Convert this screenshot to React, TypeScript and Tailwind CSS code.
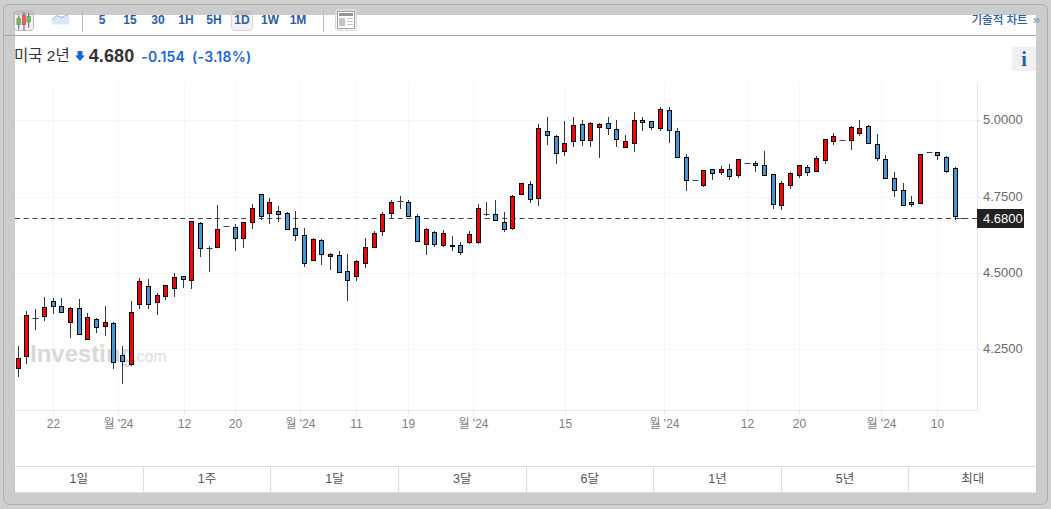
const sans = 'font-["Liberation_Sans","Noto_Sans_CJK_KR",sans-serif]'

// [type, wick top, body top, body bottom, wick bottom]
// r = up, b = down, d = doji, f = flat dash
const candles: [string, number, number, number, number][] = [
  ['r', 346, 358.3, 368.3, 376.7], ['r', 311, 315.3, 356.3, 363.7], ['d', 309.3, 318, 318, 329.7], ['r', 297, 307.3, 316.3, 320.7],
  ['b', 298, 301.3, 306.3, 314], ['b', 298, 306.3, 312.3, 313], ['r', 307.3, 308.3, 322.3, 337.7], ['b', 299, 308.3, 334.3, 334.3],
  ['r', 313.3, 317.3, 339.3, 339.7], ['b', 318.3, 319.3, 327.3, 333], ['r', 306.7, 322.3, 326.3, 336], ['b', 322.7, 323.3, 362.3, 369],
  ['b', 346, 355.3, 361.3, 384], ['r', 301, 312.3, 364.3, 365.7], ['r', 278.3, 281.3, 304.3, 308.3], ['b', 279, 286.3, 304.3, 309],
  ['r', 293.3, 295.3, 302.3, 314.7], ['r', 285.3, 285.3, 296.3, 299.3], ['r', 273.3, 277.3, 288.3, 297], ['b', 276, 276.3, 279.3, 288],
  ['r', 221, 221.3, 280.3, 289], ['b', 222.3, 223.3, 248.3, 257], ['d', 246, 248.3, 248.3, 272], ['r', 205, 229.3, 247.3, 247.3],
  ['f', 226.3, 226.3, 226.3, 226.3], ['b', 224.3, 227.3, 238.3, 251], ['r', 222.3, 222.3, 238.3, 248], ['r', 204, 208.3, 222.3, 229],
  ['b', 194.3, 194.3, 216.3, 220], ['r', 198.3, 202.3, 213.3, 223.3], ['b', 206, 211.3, 214.3, 221.7], ['b', 212.3, 213.3, 229.3, 229.7],
  ['b', 211, 228.3, 235.3, 240.7], ['b', 228.3, 235.3, 263.3, 266.7], ['r', 238.3, 239.3, 260.3, 260.3], ['b', 239.3, 240.3, 254.3, 264.7],
  ['r', 253.3, 254.3, 256.7, 270], ['b', 251, 255.3, 272.3, 272.3], ['b', 254, 271.3, 280.3, 300.7], ['r', 260.3, 261.3, 276.3, 280.7],
  ['r', 238.3, 247.3, 263.3, 267.7], ['r', 231.3, 233.3, 247.3, 247.3], ['r', 212.3, 214.3, 231.3, 235.7], ['r', 200, 202.3, 213.3, 217.3],
  ['d', 196, 201.3, 201.3, 208.3], ['b', 200, 202.3, 216.3, 216.3], ['b', 214.3, 216.3, 241.3, 241.7], ['r', 228.3, 229.3, 244.3, 254.7],
  ['b', 231.3, 232.3, 244.3, 246.7], ['r', 230.3, 233.3, 245.3, 246.7], ['b', 236.7, 245.3, 246.3, 250.7], ['b', 242.3, 245.3, 252.7, 254.7],
  ['r', 231.3, 234.3, 242.3, 243.7], ['r', 204, 208.3, 242.3, 243.3], ['d', 202.3, 214.3, 214.3, 215.3], ['b', 200, 214.3, 220.3, 220.3],
  ['b', 212.3, 222.3, 229.3, 231.7], ['r', 195.3, 196.3, 228.3, 229.3], ['r', 183.3, 183.3, 194.3, 194.3], ['b', 181, 184.3, 199.3, 202.3],
  ['r', 124, 128.3, 198.3, 206], ['b', 117, 131.3, 135.3, 144.7], ['b', 135.3, 136.3, 153.3, 163.7], ['r', 121, 143.3, 151.7, 155.7],
  ['r', 117.3, 125.3, 141.3, 146.7], ['b', 120, 124.3, 140.3, 145.7], ['r', 122.3, 123.3, 140.3, 146.7], ['r', 123.3, 124.3, 127.3, 157.7],
  ['b', 117.3, 123.3, 128.3, 134.7], ['b', 120, 129.3, 139.3, 146.7], ['r', 135.3, 141.3, 147.3, 147.7], ['r', 112.3, 120.3, 143.3, 151.7],
  ['b', 117.3, 120.3, 122.3, 130.7], ['b', 121.3, 121.3, 127.3, 129.7], ['r', 107, 109.3, 128.3, 130.7], ['b', 107, 110.3, 130.3, 142.7],
  ['b', 128.3, 131.3, 157.3, 157.7], ['b', 154.3, 157.3, 180.3, 190.7], ['f', 180.3, 180.3, 180.3, 180.3], ['r', 170.3, 170.3, 185.7, 186.7],
  ['b', 169.3, 169.3, 173.3, 179.7], ['r', 166.7, 169.3, 172.7, 174.7], ['b', 164.3, 169.3, 176.7, 179.7], ['r', 159.3, 159.3, 175.7, 177.7],
  ['f', 163.3, 163.3, 163.3, 163.3], ['b', 161.3, 163.3, 165.7, 171.7], ['b', 151.3, 165.3, 175.3, 175.3], ['b', 174.3, 174.3, 204.3, 208.7],
  ['r', 181.3, 183.3, 205.7, 209.7], ['r', 172.3, 173.3, 185.7, 188.7], ['r', 165.3, 165.3, 175.3, 177.7], ['b', 165.3, 167.3, 172.3, 175.3],
  ['r', 156.3, 158.3, 171.3, 171.3], ['r', 139.3, 139.3, 160.3, 163.7], ['r', 133.3, 136.3, 141.3, 144.7], ['f', 140.3, 140.3, 140.3, 140.3],
  ['r', 126, 127.3, 140.3, 149.7], ['r', 120, 128.3, 133.3, 135.7], ['b', 125.3, 126.3, 143.3, 143.3], ['b', 134, 144.3, 158.3, 160.3],
  ['b', 155.3, 159.3, 178.3, 178.3], ['b', 172, 178.3, 190.3, 196.7], ['b', 183.3, 190.3, 205.3, 205.3], ['b', 196.3, 202.3, 204.3, 206.7],
  ['r', 154.3, 154.3, 203.3, 203.3], ['f', 152.3, 152.3, 152.3, 152.3], ['b', 152.3, 152.3, 155.3, 159.7], ['b', 156.3, 157.3, 171.3, 172.3],
  ['b', 167.3, 168.3, 216.3, 219.7], ['f', 218.3, 218.3, 218.3, 218.3],
]

const priceTicks = [
  { y: 120, label: '5.0000' },
  { y: 197, label: '4.7500' },
  { y: 273, label: '4.5000' },
  { y: 349, label: '4.2500' },
]

const timeTicks = [
  { x: 53, label: '22' }, { x: 118, label: '월 \'24' }, { x: 184, label: '12' }, { x: 235, label: '20' },
  { x: 300, label: '월 \'24' }, { x: 356, label: '11' }, { x: 408, label: '19' }, { x: 473, label: '월 \'24' },
  { x: 565, label: '15' }, { x: 664, label: '월 \'24' }, { x: 747, label: '12' }, { x: 799, label: '20' },
  { x: 881, label: '월 \'24' }, { x: 937, label: '10' },
]

const intervals = ['5', '15', '30', '1H', '5H', '1D', '1W', '1M']
const ranges = ['1일', '1주', '1달', '3달', '6달', '1년', '5년', '최대']

const px = (v: number) => Math.floor(v) + 0.5

function Candle({ c, i }: { c: [string, number, number, number, number]; i: number }) {
  const [type, wt, bt, bb, wb] = c
  const x = px(18.3 + 8.676 * i)
  if (type === 'f') {
    return <line x1={x - 3} x2={x + 3} y1={px(wt)} y2={px(wt)} stroke="#444" />
  }
  return (
    <g>
      <line x1={x} x2={x} y1={Math.floor(wt)} y2={Math.ceil(wb)} stroke="#2f3a3f" />
      {type === 'd' ? (
        <line x1={x - 3} x2={x + 3} y1={px(bt)} y2={px(bt)} stroke="#2f3a3f" />
      ) : (
        <rect
          x={x - 2}
          width={4}
          y={px(bt)}
          height={Math.max(px(bb) - px(bt), 1)}
          fill={type === 'r' ? '#ff0000' : '#4596d6'}
          stroke="#000"
        />
      )}
    </g>
  )
}

function CandleIcon() {
  return (
    <svg width="20" height="20" viewBox="0 0 20 20">
      <path d="M5 4v15M10.5 1v19M15.500 2v15" stroke="#555" strokeWidth="1" />
      <rect x="3" y="7" width="4" height="7" fill="#6fb562" stroke="#5b9a50" strokeWidth="0.5" />
      <rect x="8.500" y="4" width="4" height="10" fill="#e8615f" stroke="#c9504e" strokeWidth="0.5" />
      <rect x="13.500" y="5" width="4" height="6" fill="#6fb562" stroke="#5b9a50" strokeWidth="0.5" />
    </svg>
  )
}

function LineIcon() {
  return (
    <svg width="18" height="12" viewBox="0 0 18 12">
      <path d="M0 7L5 2.500L10 4.500L17 0.500V11.500H0Z" fill="#dbe7f3" />
      <path d="M0 7L5 2.500L10 4.500L17 0.500" fill="none" stroke="#8fb4d8" />
    </svg>
  )
}

function LayoutIcon() {
  return (
    <svg width="22" height="22" viewBox="0 0 22 22">
      <rect x="0.500" y="0.500" width="21" height="21" rx="2" fill="#f0f0f0" fillOpacity="0.5" stroke="#dadada" />
      <rect x="2.500" y="2.500" width="17" height="17" fill="#fff" stroke="#a0a0a0" />
      <rect x="4" y="4" width="14" height="3" fill="#959595" />
      <rect x="4" y="9" width="6" height="8" fill="#c4c4c4" />
      <path d="M12 9.500h6M12 12.500h6M12 15.500h6" stroke="#c4c4c4" />
    </svg>
  )
}

function Chart() {
  return (
    <svg className="block w-full h-[386px]" viewBox="15 80 1021 386" fontFamily="'Liberation Sans','Noto Sans CJK KR',sans-serif">
      {priceTicks.map((t) => (
        <line key={t.y} x1={15} x2={977} y1={t.y + 0.5} y2={t.y + 0.5} stroke="#f6f6f6" />
      ))}
      {timeTicks.map((t) => (
        <line key={t.x} x1={t.x + 0.5} x2={t.x + 0.5} y1={82} y2={410} stroke="#f6f6f6" />
      ))}

      <text x={30} y={362} fontSize="24" fontWeight="700" fill="#d8d8d8">Investing</text>
      <rect x={100} y={344} width={4} height={4} fill="#f9e3c0" />
      <text x={132} y={362} fontSize="16" fill="#dedede">.com</text>

      <line x1={15} x2={977} y1={410.5} y2={410.5} stroke="#e6e6ee" />
      <line x1={977.5} x2={977.5} y1={82} y2={410} stroke="#e6e6ee" />
      {timeTicks.map((t) => (
        <line key={t.x} x1={t.x + 0.5} x2={t.x + 0.5} y1={410} y2={415} stroke="#e6e6ee" />
      ))}

      <line x1={15} x2={977} y1={218.5} y2={218.5} stroke="#444" strokeDasharray="5 3.7" />
      {candles.map((c, i) => (
        <Candle key={i} c={c} i={i} />
      ))}

      {priceTicks.map((t) => (
        <g key={t.label}>
          <line x1={977} x2={981} y1={t.y + 0.5} y2={t.y + 0.5} stroke="#e6e6ee" />
          <text x={983} y={t.y + 3.500} fontSize="13" fill="#6a6a6a">{t.label}</text>
        </g>
      ))}
      <rect x={977} y={209} width={47} height={19} fill="#222" />
      <text x={983} y={223} fontSize="13" fill="#fff">4.6800</text>

      {timeTicks.map((t) => (
        <text key={t.x} x={t.x + 0.5} y={428} fontSize="12" fill="#808080" textAnchor="middle">{t.label}</text>
      ))}
    </svg>
  )
}

export default function App() {
  return (
    <div className={`w-[1051px] h-[509px] overflow-hidden bg-[#cfcfcf] pl-[3px] pt-[4px] ${sans}`}>
      <div className="w-[1045px] h-[501px] rounded-md border border-[#aeaeae] bg-[#cccccc] pl-[11px] pt-[10px]">
        <div className="w-[1021px] h-[478px] bg-white flex flex-col">

          {/* toolbar */}
          <div className="-ml-[11px] h-[21px] shrink-0 border-b border-[#a8a8a8] pl-[9px] flex items-start">
            <div className="-mt-[5px] w-[21px] h-[21px] rounded-sm border border-[#bdbdbd] bg-black/5 flex items-center justify-center">
              <CandleIcon />
            </div>
            <div className="-mt-[2px] ml-[18px]">
              <LineIcon />
            </div>
            <div className="-mt-[5px] ml-[12px] w-px h-[22px] bg-[#bbbbbb]" />
            <div className="-mt-[6px] ml-[5px] flex">
              {intervals.map((v) => (
                <span key={v} className="w-[28px] h-[22px] flex items-center justify-center">
                  <span
                    className={`w-[22px] h-[22px] flex items-center justify-center text-[12px] font-bold text-[#2a5da6] ${
                      v === '1D' ? 'rounded-sm border border-[#d5d5d5] bg-black/5' : ''
                    }`}
                  >
                    {v}
                  </span>
                </span>
              ))}
            </div>
            <div className="-mt-[5px] ml-[11px] w-px h-[22px] bg-[#bbbbbb]" />
            <div className="-mt-[6px] ml-[11px]">
              <LayoutIcon />
            </div>
            <span className="ml-auto -mr-[4px] -mt-[4px] text-[11.500px] leading-[18px] text-[#2a5da6] font-medium whitespace-nowrap">
              기술적 차트 <span className="ml-[2px] text-[13px] text-[#6f8fbf]">»</span>
            </span>
          </div>

          {/* title */}
          <div className="h-[44px] shrink-0 flex items-start justify-between">
            <div className="flex items-center h-[40px] -ml-[1px]">
              <span className="text-[15.500px] text-[#333]">미국 2년</span>
              <svg className="ml-[5px]" width="10" height="10" viewBox="0 0 10 10">
                <path d="M2.500 0h5v4.500H10L5 10L0 4.500h2.500Z" fill="#1a66d8" />
              </svg>
              <span className="ml-[4px] text-[18px] font-bold text-[#333] tracking-[0.1px]">4.680</span>
              <span className="ml-[7px] text-[14px] font-semibold text-[#1a66d8] tracking-[0.2px] font-['Inter',sans-serif]">-0.154</span>
              <span className="ml-[7px] text-[14px] font-semibold text-[#1a66d8] tracking-[0.2px] font-['Inter',sans-serif]">(-3.18%)</span>
            </div>
            <div className="mt-[11px] w-[24px] h-[24px] bg-[#f0f0f0] flex items-center justify-center text-[20px] font-bold text-[#2a5da6] font-['Liberation_Serif',serif]">
              i
            </div>
          </div>

          <Chart />

          {/* range tabs */}
          <div className="flex-1 -mx-[1px] grid grid-cols-8 border-t border-b border-[#dddddd] border-l border-l-[#c4c4c4] border-r border-r-[#c4c4c4]">
            {ranges.map((r, i) => (
              <div
                key={r}
                className={`flex items-center justify-center text-[12.500px] text-[#555] ${i > 0 ? 'border-l border-[#dddddd]' : ''}`}
              >
                {r}
              </div>
            ))}
          </div>
        </div>
      </div>
    </div>
  )
}
